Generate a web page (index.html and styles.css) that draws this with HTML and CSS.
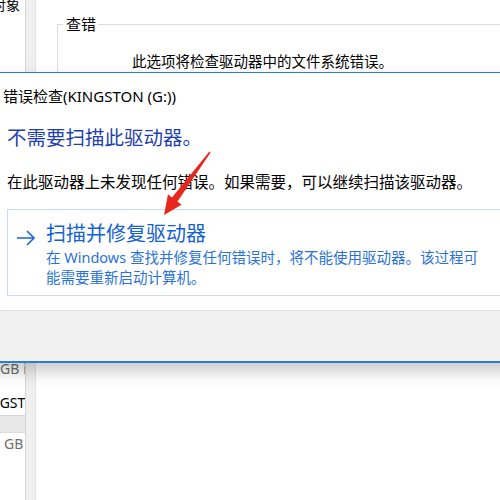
FILE: index.html
```html
<!DOCTYPE html>
<html lang="zh-CN">
<head>
    <meta charset="UTF-8">
    <title>错误检查</title>
    <link rel="stylesheet" href="styles.css">
</head>
<body>
    <div class="props">
        <div class="side">
            <div class="side-top">对象</div>
            <div class="side-gb">GB <span class="bar">i</span></div>
            <div class="side-name">NGSTON</div>
            <div class="side-head"></div>
            <div class="side-gb2">GB</div>
        </div>
        <div class="split"></div>
        <div class="main">
            <fieldset class="group">
                <legend>查错</legend>
                <p>此选项将检查驱动器中的文件系统错误。</p>
            </fieldset>
        </div>
    </div>

    <div class="dialog">
        <div class="dialog-body">
            <div class="dialog-title">错误检查(KINGSTON (G:))</div>
            <h1 class="instruction">不需要扫描此驱动器。</h1>
            <p class="content">在此驱动器上未发现任何错误。如果需要，可以继续扫描该驱动器。</p>
            <div class="command-link">
                <span class="cl-arrow">
                    <svg width="20" height="16" viewBox="0 0 20 16">
                        <path d="M1 8 H18 M11 1 L18 8 L11 15" fill="none" stroke="#1a66d6" stroke-width="1.6"/>
                    </svg>
                </span>
                <div class="cl-text">
                    <div class="cl-title">扫描并修复驱动器</div>
                    <div class="cl-desc">在 Windows 查找并修复任何错误时，将不能使用驱动器。该过程可能需要重新启动计算机。</div>
                </div>
            </div>
        </div>
        <div class="dialog-footer"></div>
    </div>

    <svg class="red-arrow" width="500" height="500" viewBox="0 0 500 500">
        <polygon points="210.6,152.4 177.5,201.6 181.5,204.8 164,215 168,194.2 172,197.4 209.4,151.6" fill="#e8261c"/>
    </svg>
</body>
</html>
```

FILE: styles.css
```css
body {
    margin: 0;
    width: 500px;
    height: 500px;
    overflow: hidden;
    background: #ffffff;
    font-family: "Noto Sans", "Noto Sans CJK SC", sans-serif;
    color: #000000;
    position: relative;
}
.props {
    display: grid;
    grid-template-columns: 26px 10px 1fr;
    height: 500px;
}
.side {
    font-size: 14px;
    overflow: hidden;
    white-space: nowrap;
    border-right: 1px solid #d4d4d4;
}
.side-top {
    margin-left: -8px;
    line-height: 14px;
    margin-top: -2px;
}
.side-gb {
    margin-top: 349px;
    color: #6d6d6d;
    line-height: 16px;
}
.side-gb .bar {
    color: #9a9a9a;
}
.side-name {
    margin-top: 18px;
    margin-left: -11px;
    line-height: 16px;
}
.side-head {
    height: 16px;
    margin-top: 4px;
    background: #e8e8e8;
    border-top: 1px solid #d6d6d6;
    border-bottom: 1px solid #dcdcdc;
}
.side-gb2 {
    margin-top: 3px;
    padding-left: 4px;
    color: #6d6d6d;
    line-height: 16px;
}
.split {
    background: #f0f0f0;
    border-right: 1px solid #e2e2e2;
}
.main {
    padding: 16px 0 0 21px;
}
.group {
    margin: 0;
    padding: 0;
    border: 1px solid #dcdcdc;
    border-right: none;
    height: 200px;
}
.group legend {
    font-size: 15px;
    padding: 0 3px;
    margin-left: 5px;
    line-height: 16px;
}
.group p {
    margin: 21px 0 0 74px;
    font-size: 14.5px;
    line-height: 16px;
}

.dialog {
    position: absolute;
    top: 72px;
    left: -10px;
    width: 540px;
    border-top: 1px solid #2b7bd0;
    border-bottom: 2px solid #2b7bd0;
    box-shadow: 0 8px 16px rgba(0, 0, 0, 0.22);
    background: #ffffff;
}
.dialog-body {
    box-sizing: border-box;
    height: 237px;
    padding: 13px 0 0 13px;
}
.dialog-title {
    font-size: 15px;
    line-height: 20px;
}
.instruction {
    margin: 20px 0 0 4px;
    font-size: 19.5px;
    font-weight: normal;
    color: #1f3fae;
    line-height: 24px;
}
.content {
    margin: 23px 0 0 4px;
    font-size: 15.5px;
    line-height: 18px;
}
.command-link {
    display: flex;
    margin: 18px 0 0 4px;
    padding: 11px 0 8px 8px;
    border: 1px solid #c3dcf3;
    border-right: none;
}
.cl-arrow {
    width: 20px;
    padding-top: 8px;
    margin-right: 10px;
}
.cl-text {
    width: 446px;
}
.cl-title {
    font-size: 20px;
    line-height: 26px;
    color: #1362d4;
}
.cl-desc {
    font-size: 14.5px;
    line-height: 20px;
    color: #2a72d8;
}
.dialog-footer {
    height: 50px;
    background: #f0f0f0;
    border-top: 1px solid #dfdfdf;
}
.red-arrow {
    position: absolute;
    top: 0;
    left: 0;
}
```
